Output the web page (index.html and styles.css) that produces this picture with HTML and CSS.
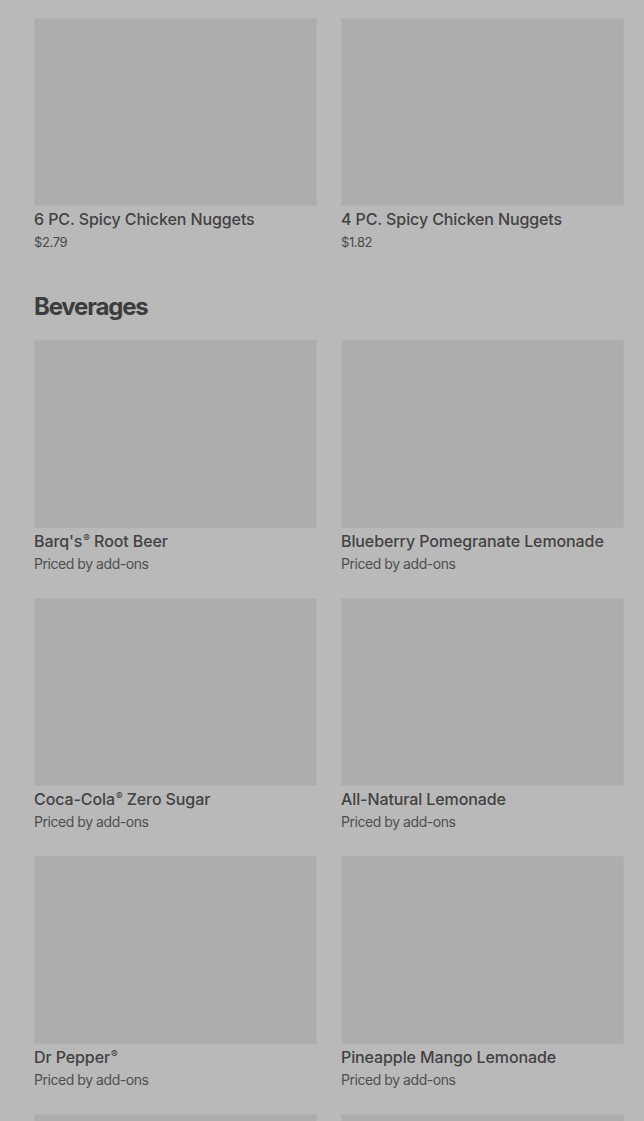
FILE: index.html
```html
<!DOCTYPE html>
<html lang="en">
<head>
<meta charset="utf-8">
<title>Menu</title>
<link rel="stylesheet" href="styles.css">
</head>
<body>
<main class="page">
  <section class="section first">
    <div class="grid">
      <article class="card">
        <div class="thumb"></div>
        <h3 class="title">6 PC. Spicy Chicken Nuggets</h3>
        <p class="price">$2.79</p>
      </article>
      <article class="card">
        <div class="thumb"></div>
        <h3 class="title">4 PC. Spicy Chicken Nuggets</h3>
        <p class="price">$1.82</p>
      </article>
    </div>
  </section>
  <section class="section">
    <h2 class="heading">Beverages</h2>
    <div class="grid">
      <article class="card">
        <div class="thumb"></div>
        <h3 class="title">Barq's<span class="reg">®</span> Root Beer</h3>
        <p class="sub">Priced by add-ons</p>
      </article>
      <article class="card">
        <div class="thumb"></div>
        <h3 class="title">Blueberry Pomegranate Lemonade</h3>
        <p class="sub">Priced by add-ons</p>
      </article>
      <article class="card">
        <div class="thumb"></div>
        <h3 class="title">Coca-Cola<span class="reg">®</span> Zero Sugar</h3>
        <p class="sub">Priced by add-ons</p>
      </article>
      <article class="card">
        <div class="thumb"></div>
        <h3 class="title">All-Natural Lemonade</h3>
        <p class="sub">Priced by add-ons</p>
      </article>
      <article class="card">
        <div class="thumb"></div>
        <h3 class="title">Dr Pepper<span class="reg">®</span></h3>
        <p class="sub">Priced by add-ons</p>
      </article>
      <article class="card">
        <div class="thumb"></div>
        <h3 class="title">Pineapple Mango Lemonade</h3>
        <p class="sub">Priced by add-ons</p>
      </article>
      <article class="card">
        <div class="thumb"></div>
      </article>
      <article class="card">
        <div class="thumb"></div>
      </article>
    </div>
  </section>
</main>
</body>
</html>
```
FILE: styles.css
```css
html, body {
  margin: 0;
  padding: 0;
  background: #b9b9b9;
  font-family: Inter, Roboto, "Liberation Sans", sans-serif;
  color: #404040;
}
.page {
  padding: 18px 20px 0 34px;
}
.grid {
  display: grid;
  grid-template-columns: 283px 283px;
  column-gap: 24px;
  row-gap: 24px;
}
.card {
  display: flex;
  flex-direction: column;
}
.thumb {
  height: 188px;
  background: #adadad;
  box-shadow: inset 0 0 0 1px #b1b1b1;
}
.title {
  margin: 2px 0 0;
  font-size: 16px;
  line-height: 22px;
  font-weight: 500;
  letter-spacing: -0.1px;
  color: #424242;
  white-space: nowrap;
}
.reg {
  font-size: 10px;
  line-height: 0;
  vertical-align: 5px;
  margin-left: 1px;
}
.price {
  margin: 2px 0 0;
  font-size: 13px;
  line-height: 20px;
  color: #4a4a4a;
  letter-spacing: -0.4px;
}
.sub {
  margin: 2px 0 0;
  font-size: 14px;
  line-height: 20px;
  color: #4f4f4f;
  letter-spacing: -0.45px;
}
.section.first {
  margin-bottom: 39px;
}
.heading {
  margin: 0 0 17px;
  font-size: 24px;
  line-height: 32px;
  font-weight: 700;
  letter-spacing: -1.2px;
  color: #3c3c3c;
}
```
